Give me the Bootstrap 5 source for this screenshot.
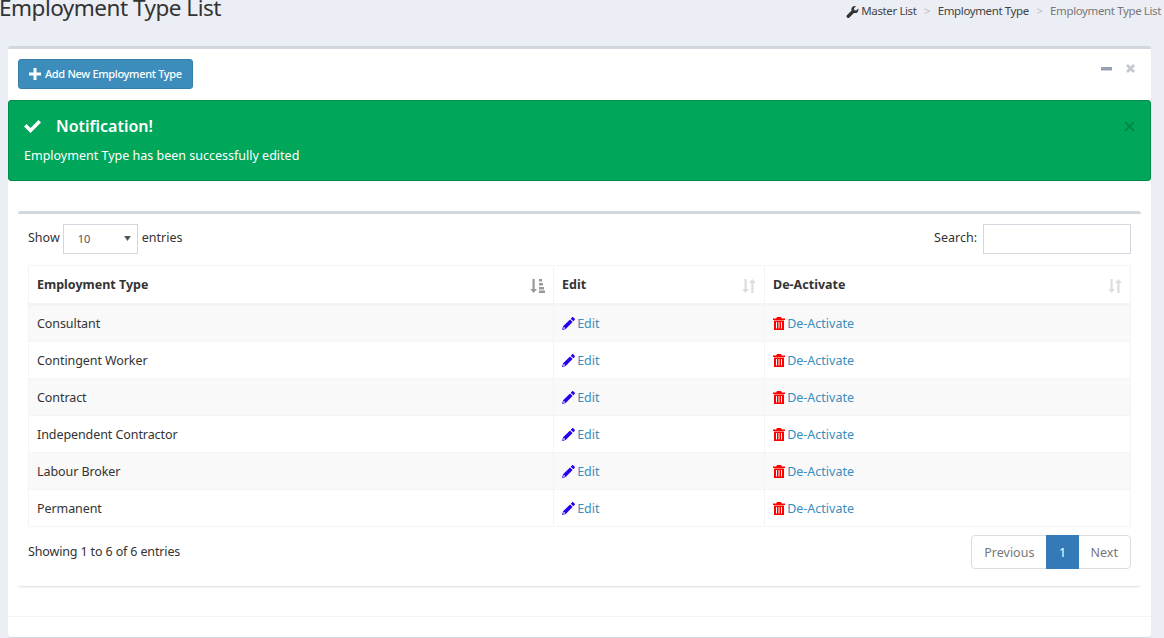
<!DOCTYPE html>
<html lang="en">
<head>
  <meta charset="UTF-8">
  <meta name="viewport" content="width=device-width, initial-scale=1.0">
  <title>Employment Type List</title>
  <link rel="stylesheet" href="https://cdn.jsdelivr.net/npm/bootstrap@5.3.0/dist/css/bootstrap.min.css">
  <script src="https://cdn.jsdelivr.net/npm/bootstrap@5.3.0/dist/js/bootstrap.bundle.min.js"></script>
  <style>
    html, body { height: 638px; overflow: hidden; }
    body { background: #ebeef4; color: #333; font-family: "Noto Sans", "Liberation Sans", sans-serif; font-size: 13px; }
    .page-head { height: 46px; padding-right: 3px; }
    .page-head h1 { font-size: 22.5px; font-weight: 400; letter-spacing: -.5px; line-height: 24px; margin: -4px 0 0 -1px; color: #333; }
    .page-head .breadcrumb { font-size: 11.5px; letter-spacing: -.38px; margin: 2px 0 0; --bs-breadcrumb-divider: ">"; --bs-breadcrumb-divider-color: #bbb; --bs-breadcrumb-item-padding-x: 7.5px; }
    .page-head .breadcrumb a { color: #444; text-decoration: none; }
    .page-head .breadcrumb-item.active { color: #777; }
    .main-box { margin: 0 13px 0 8px; height: 591px; background: #fff; border-top: 3px solid #d2d6de; border-radius: 3px; box-shadow: 0 1px 1px rgba(0,0,0,.1); }
    .box-top { height: 51px; padding: 10px 16px 0 10px; }
    .add-btn { background: #3c8dbc; border: 1px solid #367fa9; color: #fff; font-size: 11px; letter-spacing: -.33px; font-weight: 500; height: 30px; padding: 0 10px; border-radius: 3px; }
    .add-btn:hover { background: #367fa9; color: #fff; }
    .tool-row { margin-top: 5px; gap: 14px; }
    .tool-btn { color: #97a0b3; padding: 0; border: 0; }
    .note { background: #00a65a; border: 1px solid #008d4c; border-radius: 3px; color: #fff; height: 81px; padding: 13px 15px; margin: 0; }
    .note h4 { font-size: 16px; font-weight: 600; line-height: 24px; margin: 0 0 9px; gap: 15px; }
    .note p { font-size: 12.5px; line-height: 18px; margin: 0; }
    .note-close { color: #00874a; padding: 0; border: 0; margin-top: 7px; }
    .inner-box { margin: 30px 10px 0; height: 376px; border-top: 3px solid #d2d6de; border-radius: 3px; border-bottom: 1px solid #e6e6e6; padding: 9px 10px 10px; box-shadow: 0 1px 1px rgba(0,0,0,.04); }
    .list-ctrl { height: 31px; font-size: 12.5px; margin-bottom: 11px; }
    .list-ctrl label { margin-right: 2px; }
    .list-ctrl .form-select { width: 75px; height: 30px; margin-left: -1px; border-radius: 0; border-color: #d2d6de; font-size: 11px; padding: 5px 14px 3px; color: #555; background-image: url("data:image/svg+xml,%3Csvg xmlns='http://www.w3.org/2000/svg' viewBox='0 0 8 6'%3E%3Cpath fill='%23555' d='M0 0h8L4 6z'/%3E%3C/svg%3E"); background-size: 7px 5px; background-position: right 6px center; }
    .list-ctrl .form-control { width: 148px; height: 30px; border-radius: 0; border-color: #d2d6de; }
    .data-tbl { table-layout: fixed; width: 1103px; margin: 0; --bs-table-striped-bg: #f9f9f9; --bs-table-border-color: #f4f4f4; --bs-table-striped-color: #333; --bs-table-color: #333; font-size: 12.5px; }
    .data-tbl th { height: 39px; padding: 2px 8px 0; border-bottom: 3px solid #f4f4f4; font-weight: 700; vertical-align: middle; }
    .data-tbl td { height: 37px; padding: 2px 8px 0; vertical-align: middle; letter-spacing: -.08px; }
    .data-tbl td svg { vertical-align: -2px; margin-right: -1px; }
    .data-tbl a { color: #3c8dbc; text-decoration: none; letter-spacing: 0; }
    .col-type { width: 525px; }
    .col-edit { width: 211px; }
    .sort-ic { color: #ddd; }
    .sort-ic.on { color: #999; }
    .pencil-ic { color: #2200f0; }
    .trash-ic { color: #f00; }
    .list-foot { font-size: 12.5px; margin-top: 8px; }
    .foot-info { padding-top: 8px; letter-spacing: -.14px; }
    .list-foot .pagination { --bs-pagination-font-size: 12.5px; --bs-pagination-padding-x: 12px; --bs-pagination-padding-y: 0; --bs-pagination-color: #777; --bs-pagination-border-color: #ddd; --bs-pagination-active-bg: #337ab7; --bs-pagination-active-border-color: #337ab7; --bs-pagination-border-radius: 4px; margin: 0; }
    .list-foot .page-link { line-height: 34px; height: 34px; }
    .list-foot .active .page-link { padding-left: 11.5px; padding-right: 11.5px; }
    .box-foot { margin-top: 29px; border-top: 1px solid #f4f4f4; }
  </style>
</head>
<body>
  <div class="page-head d-flex justify-content-between align-items-start">
    <h1>Employment Type List</h1>
    <nav aria-label="breadcrumb">
      <ol class="breadcrumb">
        <li class="breadcrumb-item"><a href="#">
          <svg width="13" height="12" viewBox="0 0 16 16" fill="#333"><path d="M15.6 3.4 12.9 6l-2.500-.4L10 3.100 12.600.4C11-.2 9 .2 7.800 1.400 6.500 2.700 6.200 4.500 6.800 6.100L.5 12.400c-.7.700-.7 1.800 0 2.500l.6.600c.7.700 1.800.7 2.500 0l6.300-6.300c1.600.6 3.400.3 4.700-1 1.200-1.200 1.600-3.200 1-4.800z"/></svg>
          Master List</a></li>
        <li class="breadcrumb-item"><a href="#">Employment Type</a></li>
        <li class="breadcrumb-item active" aria-current="page">Employment Type List</li>
      </ol>
    </nav>
  </div>

  <div class="main-box">
    <div class="box-top d-flex justify-content-between align-items-start">
      <button type="button" class="btn add-btn d-inline-flex align-items-center gap-1">
        <svg width="12" height="12" viewBox="0 0 12 12" fill="#fff"><path d="M4.500 0h3v4.500H12v3H7.500V12h-3V7.500H0v-3h4.500z"/></svg>
        Add New Employment Type
      </button>
      <div class="tool-row d-flex align-items-center">
        <button type="button" class="btn tool-btn d-flex" aria-label="Collapse"><svg width="11" height="4" viewBox="0 0 11 4" fill="currentColor"><rect width="11" height="3.500" rx=".6"/></svg></button>
        <button type="button" class="btn tool-btn d-flex" aria-label="Remove"><svg width="9" height="9" viewBox="0 0 10 10" fill="#c4c8d0"><path d="M0 2.200 2.200 0 5 2.800 7.800 0 10 2.200 7.200 5 10 7.800 7.800 10 5 7.200 2.200 10 0 7.800 2.800 5z"/></svg></button>
      </div>
    </div>

    <div class="note d-flex justify-content-between align-items-start" role="alert">
      <div>
        <h4 class="d-flex align-items-center">
          <svg width="17" height="14" viewBox="0 0 17 14" fill="#fff"><path d="M0 7.500 2.500 5l4 4L14.500 1 17 3.500 6.500 14z"/></svg>
          Notification!
        </h4>
        <p>Employment Type has been successfully edited</p>
      </div>
      <button type="button" class="btn note-close d-flex" aria-label="Close"><svg width="11" height="11" viewBox="0 0 11 11" fill="none" stroke="currentColor" stroke-width="1.800"><path d="M1 1l9 9M10 1l-9 9"/></svg></button>
    </div>

    <div class="inner-box">
      <div class="list-ctrl d-flex justify-content-between align-items-center">
        <div class="d-flex align-items-center gap-1">
          <span>Show</span>
          <select class="form-select" aria-label="Entries"><option>10</option><option>25</option><option>50</option></select>
          <span>entries</span>
        </div>
        <div class="d-flex align-items-center gap-1">
          <label for="tblSearch">Search:</label>
          <input type="text" id="tblSearch" class="form-control">
        </div>
      </div>

      <table class="table table-bordered table-striped data-tbl">
        <thead>
          <tr>
            <th class="col-type"><div class="d-flex justify-content-between align-items-center">Employment Type
              <svg class="sort-ic on" width="15" height="14" viewBox="0 0 15 14" fill="currentColor"><path d="M2.500 0h2.200v10H7L3.600 14 .2 10h2.300z"/><path d="M9 0h3v2.500H9zM9 4h4v2.500H9zM9 8h5v2.500H9zM9 11.500h6V14H9z"/></svg></div></th>
            <th class="col-edit"><div class="d-flex justify-content-between align-items-center">Edit
              <svg class="sort-ic" width="14" height="14" viewBox="0 0 14 14" fill="currentColor"><path d="M2.500 0h2.200v10H7L3.600 14 .2 10h2.300zM9.300 14h2.200V4h2.300L10.400 0 7 4h2.300z"/></svg></div></th>
            <th><div class="d-flex justify-content-between align-items-center">De-Activate
              <svg class="sort-ic" width="14" height="14" viewBox="0 0 14 14" fill="currentColor"><path d="M2.500 0h2.200v10H7L3.600 14 .2 10h2.300zM9.300 14h2.200V4h2.300L10.400 0 7 4h2.300z"/></svg></div></th>
          </tr>
        </thead>
        <tbody id="typeRows"></tbody>
      </table>

      <div class="list-foot d-flex justify-content-between align-items-start">
        <div class="foot-info">Showing 1 to 6 of 6 entries</div>
        <ul class="pagination">
          <li class="page-item"><a class="page-link" href="#">Previous</a></li>
          <li class="page-item active"><a class="page-link" href="#">1</a></li>
          <li class="page-item"><a class="page-link" href="#">Next</a></li>
        </ul>
      </div>
    </div>
    <div class="box-foot"></div>
  </div>

  <script>
    // rows of the table
    const types = ['Consultant', 'Contingent Worker', 'Contract', 'Independent Contractor', 'Labour Broker', 'Permanent'];
    const pencil = '<svg class="pencil-ic" width="13" height="13" viewBox="0 0 13 13" fill="currentColor"><path d="M10 .4c.4-.4 1-.4 1.400 0l1.200 1.200c.4.4.4 1 0 1.400l-1.300 1.300L8.700 1.700zM8 2.400l2.600 2.600-6.900 6.900L0 13l1.100-3.700zM1.800 9.700l-.7 2.200 2.200-.7z"/></svg>';
    const trash = '<svg class="trash-ic" width="12" height="13" viewBox="0 0 12 13" fill="currentColor"><path fill-rule="evenodd" d="M4 0h4l.8 1.500H12V3H0V1.500h3.200zM1 3.500h10V13H1zM3 5v6.500h1V5zm2.500 0v6.500h1V5zM8 5v6.500h1V5z"/></svg>';
    document.getElementById('typeRows').innerHTML = types.map(t =>
      `<tr><td>${t}</td><td>${pencil} <a href="#">Edit</a></td><td>${trash} <a href="#">De-Activate</a></td></tr>`
    ).join('');
  </script>
</body>
</html>
